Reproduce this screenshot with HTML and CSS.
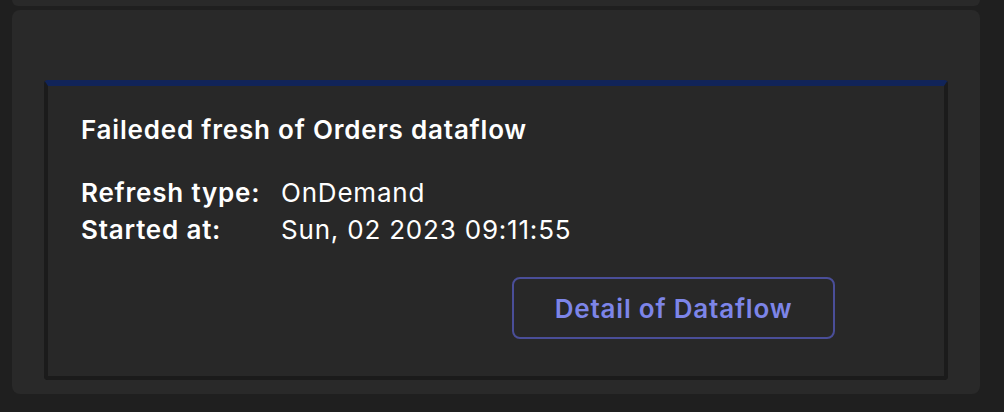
FILE: index.html
```html
<!DOCTYPE html>
<html>
<head>
<meta charset="utf-8">
<link rel="stylesheet" href="styles.css">
</head>
<body>
<div class="page">
  <div class="prev-card"></div>
  <div class="panel">
    <div class="notice">
      <h2 class="title">Faileded fresh of Orders dataflow</h2>
      <div class="details">
        <div class="label">Refresh type:</div>
        <div class="value">OnDemand</div>
        <div class="label">Started at:</div>
        <div class="value">Sun, 02 2023 09:11:55</div>
      </div>
      <div class="actions">
        <button class="btn">Detail of Dataflow</button>
      </div>
    </div>
  </div>
</div>
</body>
</html>
```
FILE: styles.css
```css
html, body {
  margin: 0;
  padding: 0;
  background: #1f1f1f;
  height: 100%;
}
body {
  font-family: Inter, "Noto Sans", sans-serif;
  color: #ffffff;
}
.page {
  padding: 0 24px 0 12px;
  display: flex;
  flex-direction: column;
  gap: 4px;
}
.prev-card {
  height: 6px;
  background: #292929;
  border-radius: 0 0 8px 8px;
}
.panel {
  background: #292929;
  border-radius: 8px;
  height: 384px;
  box-sizing: border-box;
  padding: 70px 32px 14px 32px;
}
.notice {
  height: 300px;
  box-sizing: border-box;
  background: #282828;
  border: 4px solid #1b1b1b;
  border-top: 6px solid #112459;
  border-radius: 4px;
  padding: 0 0 0 33px;
  display: flex;
  flex-direction: column;
}
.title {
  margin: 28px 0 0 0;
  font-size: 26px;
  font-weight: 600;
  line-height: 32px;
  letter-spacing: 0.8px;
}
.details {
  margin-top: 28px;
  display: grid;
  grid-template-columns: 200px auto;
  font-size: 26px;
  line-height: 37px;
  letter-spacing: 0.8px;
}
.label {
  font-weight: 600;
}
.value {
  font-weight: 400;
}
.actions {
  display: flex;
  justify-content: flex-end;
  padding-right: 109px;
  margin-top: 29px;
}
.btn {
  width: 323px;
  height: 62px;
  box-sizing: border-box;
  background: transparent;
  border: 2px solid #4a4e98;
  border-radius: 8px;
  color: #7d85e8;
  font-family: Inter, "Noto Sans", sans-serif;
  font-size: 26px;
  font-weight: 600;
  letter-spacing: 0.8px;
  padding: 0;
}
```
